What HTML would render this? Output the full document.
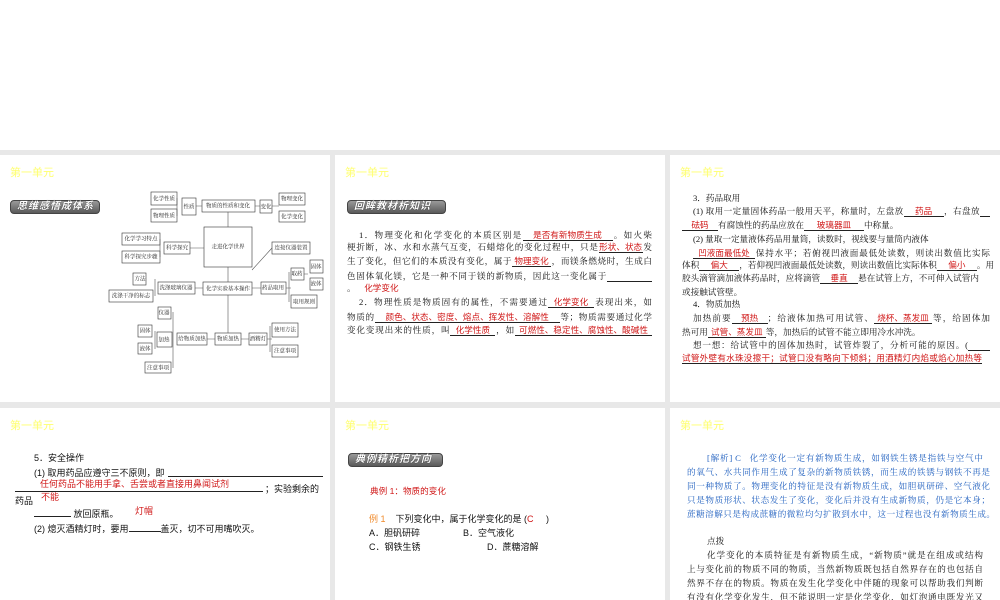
<!DOCTYPE html>
<html><head><meta charset="utf-8"><style>
*{margin:0;padding:0;box-sizing:border-box}
body{width:1000px;height:600px;background:#e8e8e8;position:relative;overflow:hidden;font-family:"Liberation Serif","Noto Serif CJK SC",serif}
.top{position:absolute;left:0;top:0;width:1000px;height:150px;background:#fff}
.p{position:absolute;background:#fff;overflow:hidden}
.h{position:absolute;left:10px;top:9px;font:11px "Liberation Sans","Noto Sans CJK SC",sans-serif;color:#ffff70}
.b{position:absolute;height:14px;border-radius:4px;background:linear-gradient(#9a9a9a,#5a5a5a);border:1px solid #444;color:#fff;font:italic bold 10px/12px "Liberation Sans","Noto Sans CJK SC",sans-serif;padding-left:6px;letter-spacing:1px;text-shadow:0 0 1px #000}
.l{position:absolute;white-space:nowrap;font-size:8.6px;line-height:11px;color:#111;text-align:justify;text-align-last:justify}
.u{display:inline-block;border-bottom:1px solid #222;color:#d01818;text-align:center;text-align-last:center;font-family:"Liberation Sans","Noto Sans CJK SC",sans-serif;line-height:10px}
.r{color:#d01818;font-family:"Liberation Sans","Noto Sans CJK SC",sans-serif}
.s{font-family:"Liberation Sans","Noto Sans CJK SC",sans-serif}
.bl{color:#1f5fbf}
</style></head><body>
<div class="top"></div>

<!-- panel 1 -->
<div class="p" style="left:0;top:155px;width:330px;height:247px">
<div class="h">第一单元</div>
<div class="b" style="left:10px;top:45px;width:90px">思维感悟成体系</div>
<svg width="330" height="247" style="position:absolute;left:0;top:0" font-family="Noto Serif CJK SC,serif" font-size="5.5" fill="#222">
<g transform="translate(0,-155)" stroke="#333" stroke-width="0.6">
<g fill="#fff">
<rect x="151" y="192" width="26" height="13"/><rect x="151" y="209" width="26" height="13"/>
<rect x="182" y="198" width="14" height="17"/><rect x="202" y="200" width="53" height="12"/>
<rect x="260" y="200" width="12" height="13"/><rect x="279" y="193" width="26" height="12"/>
<rect x="279" y="211" width="26" height="11"/><rect x="204" y="227" width="48" height="40"/>
<rect x="122" y="233" width="38" height="12"/><rect x="122" y="251" width="38" height="12"/>
<rect x="164" y="242" width="26" height="12"/><rect x="272" y="242" width="38" height="12"/>
<rect x="291" y="268" width="13" height="12"/><rect x="310" y="260" width="13" height="13"/>
<rect x="310" y="278" width="13" height="12"/><rect x="291" y="295" width="26" height="13"/>
<rect x="261" y="282" width="25" height="12"/><rect x="203" y="282" width="49" height="13"/>
<rect x="158" y="282" width="37" height="12"/><rect x="133" y="273" width="13" height="12"/>
<rect x="109" y="290" width="44" height="12"/><rect x="158" y="307" width="13" height="12"/>
<rect x="138" y="325" width="14" height="12"/><rect x="138" y="343" width="14" height="11"/>
<rect x="157" y="332" width="15" height="15"/><rect x="177" y="333" width="30" height="12"/>
<rect x="215" y="333" width="26" height="12"/><rect x="249" y="333" width="18" height="12"/>
<rect x="272" y="323" width="26" height="14"/><rect x="272" y="345" width="26" height="12"/>
<rect x="145" y="362" width="26" height="11"/>
</g>
<g fill="none" stroke="#555">
<path d="M202 206H196M255 206H260M272 206H279M228 227V212M204 248H190M228 267V282M203 288H195M252 288H261M286 288H291M228 295V333M215 339H207M241 339H249M267 339H272M252 270L272 248M177 198V216M160 239V257M304 274H308M155 279V296M173 312V368M155 331V349M270 326V352M289 272V302"/>
</g>
</g>
<g text-anchor="middle" dominant-baseline="middle" transform="translate(0,-155)">
<text x="164" y="199">化学性质</text><text x="164" y="216">物理性质</text><text x="189" y="207">性质</text>
<text x="228" y="206">物质的性质和变化</text><text x="266" y="207">变化</text><text x="292" y="199">物理变化</text>
<text x="292" y="217">化学变化</text><text x="228" y="247">走进化学世界</text><text x="141" y="239">化学学习特点</text>
<text x="141" y="257">科学探究步骤</text><text x="177" y="248">科学探究</text><text x="291" y="248">连接仪器装置</text>
<text x="297" y="274">取药</text><text x="316" y="267">固体</text><text x="316" y="284">液体</text>
<text x="304" y="302">取用规则</text><text x="273" y="288">药品取用</text><text x="228" y="289">化学实验基本操作</text>
<text x="176" y="288">洗涤玻璃仪器</text><text x="140" y="279">方法</text><text x="131" y="296">洗涤干净的标志</text>
<text x="164" y="313">仪器</text><text x="145" y="331">固体</text><text x="145" y="349">液体</text>
<text x="164" y="340">加热</text><text x="192" y="339">给物质加热</text><text x="228" y="339">物质加热</text>
<text x="258" y="339">酒精灯</text><text x="285" y="330">使用方法</text><text x="285" y="351">注意事项</text>
<text x="158" y="368">注意事项</text>
</g>
</svg>
</div>

<!-- panel 2 -->
<div class="p" style="left:335px;top:155px;width:330px;height:247px">
<div class="h">第一单元</div>
<div class="b" style="left:12px;top:45px;width:99px">回眸教材析知识</div>
<div class="l" style="left:24px;top:75px;width:293px">1．物理变化和化学变化的本质区别是<span class="u" style="width:90px">是否有新物质生成</span>。如火柴</div>
<div class="l" style="left:12px;top:87px;width:305px">梗折断，冰、水和水蒸气互变，石蜡熔化的变化过程中，只是<span class="u" style="width:44px">形状、状态</span>发</div>
<div class="l" style="left:12px;top:101px;width:305px">生了变化，但它们的本质没有变化，属于<span class="u" style="width:39px">物理变化</span>，而镁条燃烧时，生成白</div>
<div class="l" style="left:12px;top:116px;width:305px">色固体氧化镁，它是一种不同于镁的新物质，因此这一变化属于<span class="u" style="width:45px">&nbsp;</span></div>
<div class="l" style="left:12px;top:128px;text-align-last:auto">。&nbsp;&nbsp;&nbsp;&nbsp;<span class="r">化学变化</span></div>
<div class="l" style="left:24px;top:142px;width:293px">2．物理性质是物质固有的属性，不需要通过<span class="u" style="width:46px">化学变化</span>表现出来，如</div>
<div class="l" style="left:12px;top:157px;width:305px">物质的<span class="u" style="width:185px">颜色、状态、密度、熔点、挥发性、溶解性</span>等；物质需要通过化学</div>
<div class="l" style="left:12px;top:170px;width:305px">变化变现出来的性质，叫<span class="u" style="width:45px">化学性质</span>，如<span class="u" style="width:137px">可燃性、稳定性、腐蚀性、酸碱性</span></div>
</div>

<!-- panel 3 -->
<div class="p" style="left:670px;top:155px;width:330px;height:247px">
<div class="h">第一单元</div>
<div class="l" style="left:23px;top:38px;text-align-last:auto">3．药品取用</div>
<div class="l" style="left:23px;top:51px;width:297px">(1) 取用一定量固体药品一般用天平，称量时，左盘放<span class="u" style="width:40px">药品</span>，右盘放<span class="u" style="width:10px">&nbsp;</span></div>
<div class="l" style="left:12px;top:65px;text-align-last:auto"><span class="u" style="width:36px">砝码</span>有腐蚀性的药品应放在<span class="u" style="width:60px">玻璃器皿</span>中称量。</div>
<div class="l" style="left:23px;top:79px;text-align-last:auto">(2) 量取一定量液体药品用量筒，读数时，视线要与量筒内液体</div>
<div class="l" style="left:23px;top:93px;width:297px"><span class="u" style="width:62px">凹液面最低处</span>保持水平；若俯视凹液面最低处读数，则读出数值比实际</div>
<div class="l" style="left:12px;top:105px;width:308px">体积<span class="u" style="width:40px">偏大</span>，若仰视凹液面最低处读数，则读出数值比实际体积<span class="u" style="width:40px">偏小</span>。用</div>
<div class="l" style="left:12px;top:118px;width:297px">胶头滴管滴加液体药品时，应将滴管<span class="u" style="width:38px">垂直</span>悬在试管上方，不可伸入试管内</div>
<div class="l" style="left:12px;top:132px;text-align-last:auto">或接触试管壁。</div>
<div class="l" style="left:23px;top:144px;text-align-last:auto">4．物质加热</div>
<div class="l" style="left:23px;top:158px;width:297px">加热前要<span class="u" style="width:36px">预热</span>；给液体加热可用试管、<span class="u" style="width:58px">烧杯、蒸发皿</span>等，给固体加</div>
<div class="l" style="left:12px;top:172px;text-align-last:auto">热可用<span class="u" style="width:58px">试管、蒸发皿</span>等，加热后的试管不能立即用冷水冲洗。</div>
<div class="l" style="left:23px;top:185px;width:297px">想一想：给试管中的固体加热时，试管炸裂了，分析可能的原因。(<span class="u" style="width:22px">&nbsp;</span></div>
<div class="l" style="left:12px;top:198px;width:300px"><span class="u" style="width:300px;text-align:justify;text-align-last:justify">试管外壁有水珠没擦干；试管口没有略向下倾斜；用酒精灯内焰或焰心加热等</span></div>
</div>

<!-- panel 4 -->
<div class="p" style="left:0;top:408px;width:330px;height:192px">
<div class="h">第一单元</div>
<div class="l s" style="left:34px;top:45px;font-size:9px;text-align-last:auto">5．安全操作</div>
<div class="l s" style="left:34px;top:60px;font-size:9px;text-align-last:auto">(1) 取用药品应遵守三不原则，即</div>
<div style="position:absolute;left:168px;top:68px;width:155px;border-bottom:1px solid #222"></div>
<div style="position:absolute;left:15px;top:83px;width:248px;border-bottom:1px solid #222"></div>
<div class="l r" style="left:40px;top:71px;font-size:9px;text-align-last:auto">任何药品不能用手拿、舌尝或者直接用鼻闻试剂</div>
<div class="l s" style="left:265px;top:76px;font-size:9px;text-align-last:auto">；实验剩余的</div>
<div class="l s" style="left:15px;top:88px;font-size:9px;text-align-last:auto">药品</div>
<div class="l r" style="left:41px;top:84px;font-size:9px;text-align-last:auto">不能</div>
<div class="l s" style="left:34px;top:100px;font-size:9px;text-align-last:auto"><span style="display:inline-block;width:37px;border-bottom:1px solid #222;height:9px"></span> 放回原瓶。</div>
<div class="l r" style="left:135px;top:98px;font-size:9px;text-align-last:auto">灯帽</div>
<div class="l s" style="left:34px;top:115px;font-size:9px;text-align-last:auto">(2) 熄灭酒精灯时，要用<span style="display:inline-block;width:32px;border-bottom:1px solid #222;height:9px"></span>盖灭，切不可用嘴吹灭。</div>
</div>

<!-- panel 5 -->
<div class="p" style="left:335px;top:408px;width:330px;height:192px">
<div class="h">第一单元</div>
<div class="b" style="left:13px;top:45px;width:95px">典例精析把方向</div>
<div class="l r" style="left:35px;top:78px;font-size:8.6px;text-align-last:auto">典例 1：物质的变化</div>
<div class="l s" style="left:34px;top:106px;font-size:9px;text-align-last:auto"><span style="color:#f08a2a">例 1</span>&nbsp;&nbsp;&nbsp;&nbsp;下列变化中，属于化学变化的是 (<span style="color:#d01818">C</span>&nbsp;&nbsp;&nbsp;&nbsp;&nbsp;)</div>
<div class="l s" style="left:34px;top:120px;font-size:9px;text-align-last:auto">A．胆矾研碎</div>
<div class="l s" style="left:128px;top:120px;font-size:9px;text-align-last:auto">B．空气液化</div>
<div class="l s" style="left:34px;top:134px;font-size:9px;text-align-last:auto">C．钢铁生锈</div>
<div class="l s" style="left:152px;top:134px;font-size:9px;text-align-last:auto">D．蔗糖溶解</div>
</div>

<!-- panel 6 -->
<div class="p" style="left:670px;top:408px;width:330px;height:192px">
<div class="h">第一单元</div>
<div class="l bl" style="left:37px;top:45px;width:276px">[解析] C&nbsp;&nbsp;&nbsp;化学变化一定有新物质生成，如钢铁生锈是指铁与空气中</div>
<div class="l bl" style="left:17px;top:59px;width:303px">的氧气、水共同作用生成了复杂的新物质铁锈，而生成的铁锈与钢铁不再是</div>
<div class="l bl" style="left:17px;top:73px;width:303px">同一种物质了。物理变化的特征是没有新物质生成，如胆矾研碎、空气液化</div>
<div class="l bl" style="left:17px;top:87px;width:303px">只是物质形状、状态发生了变化，变化后并没有生成新物质，仍是它本身；</div>
<div class="l bl" style="left:17px;top:101px;width:308px">蔗糖溶解只是构成蔗糖的微粒均匀扩散到水中，这一过程也没有新物质生成。</div>
<div class="l" style="left:37px;top:128px;text-align-last:auto">点拨</div>
<div class="l" style="left:37px;top:142px;width:276px">化学变化的本质特征是有新物质生成，“新物质”就是在组成或结构</div>
<div class="l" style="left:17px;top:156px;width:296px">上与变化前的物质不同的物质，当然新物质既包括自然界存在的也包括自</div>
<div class="l" style="left:17px;top:170px;width:296px">然界不存在的物质。物质在发生化学变化中伴随的现象可以帮助我们判断</div>
<div class="l" style="left:17px;top:184px;width:296px">有没有化学变化发生，但不能说明一定是化学变化，如灯泡通电既发光又</div>
</div>
</body></html>
